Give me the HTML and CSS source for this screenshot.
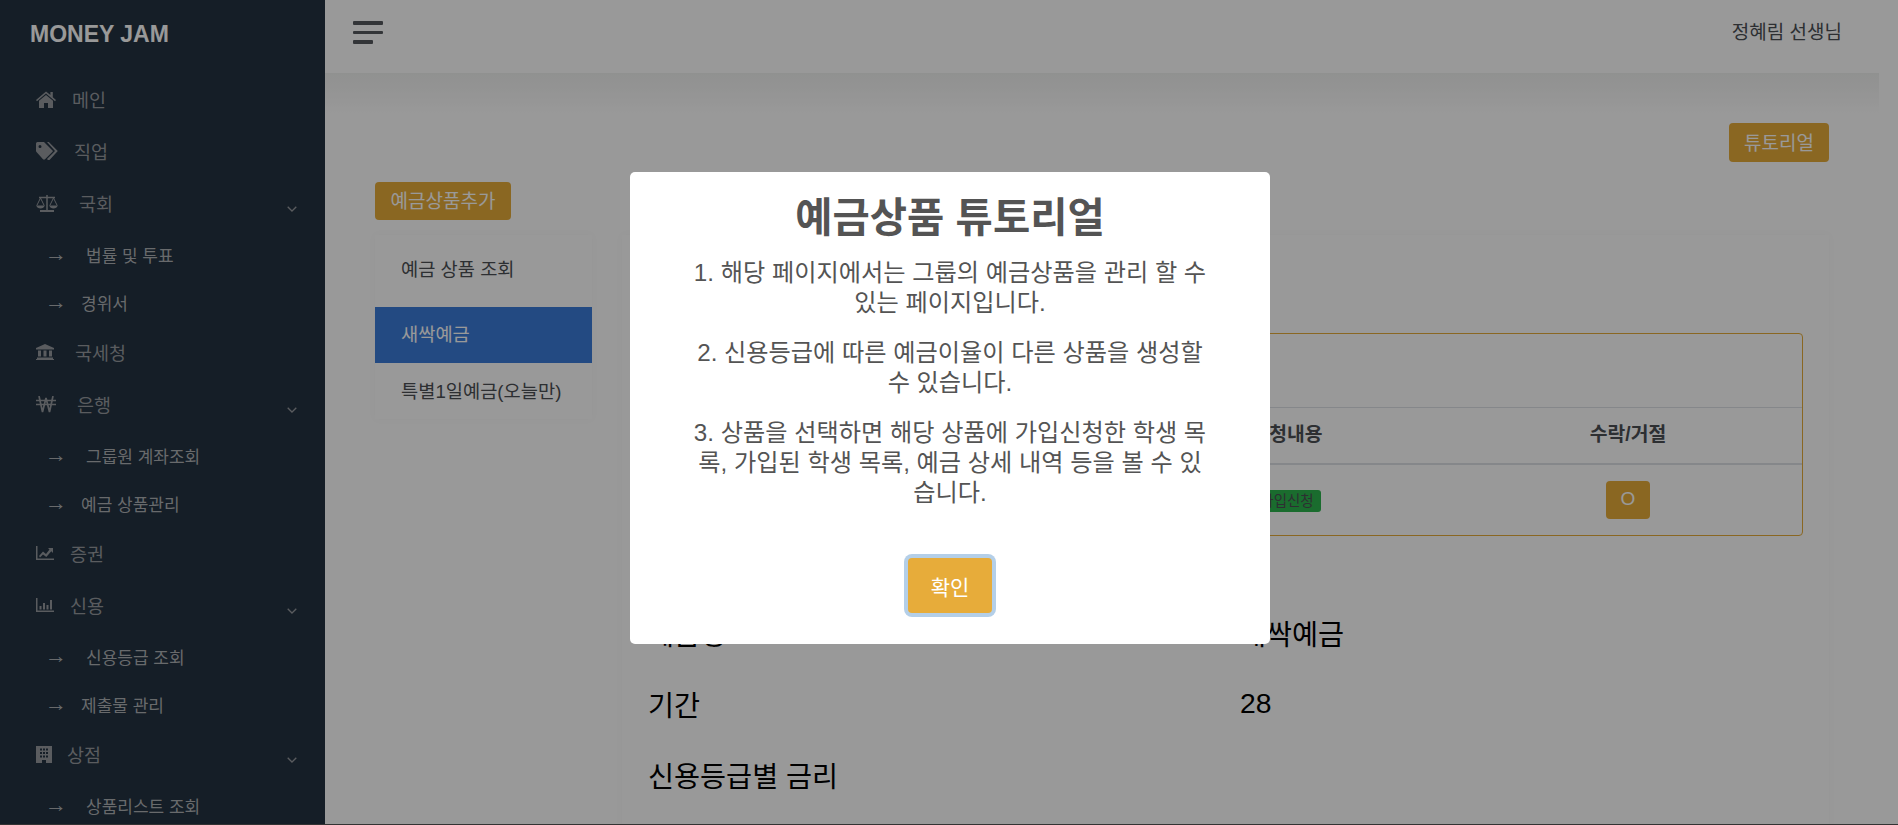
FILE: index.html
```html
<!DOCTYPE html>
<html lang="ko">
<head>
<meta charset="utf-8">
<title>MONEY JAM</title>
<link rel="stylesheet" href="styles.css">
</head>
<body>
<div class="app">
  <aside class="sidebar">
    <div class="logo">MONEY JAM</div>
    <nav class="menu">
      <a class="item"><svg class="ico gap16" width="20" height="18" viewBox="0 0 20 18"><path d="M10 1.5 0 10l1 1.2L10 3.6l9 7.6 1-1.2-3.200-2.700V2h-2.400v3L10 1.500zM10 5 3 10.800V18h5v-5h4v5h5v-7.200L10 5z"/></svg>메인</a>
      <a class="item"><svg class="ico gap16" width="22" height="18" viewBox="0 0 22 18"><path d="M0 1.500A1.500 1.500 0 0 1 1.500 0H8l9 9-.500.800L9 17.300a1.500 1.500 0 0 1-2 0L.500 10A1.500 1.500 0 0 1 0 9V1.500zM4 3a1.500 1.500 0 1 0 0 3 1.500 1.500 0 0 0 0-3zM11 0h1.800l9 9-8.300 9h-1.600l-.900-.900L19 9 11 0z" fill-rule="evenodd"/></svg>직업</a>
      <a class="item"><svg class="ico gap21" width="22" height="18" viewBox="0 0 22 18"><path class="line" d="M11 1v15M3 3.500h16" stroke-width="1.500"/><path class="line" d="M.8 11.500 4.500 4l3.700 7.500M13.800 11.500 17.500 4l3.700 7.500" stroke-width="1"/><path d="M.3 11.500h8.400c-.4 2-2.200 3-4.200 3s-3.800-1-4.200-3zM13.300 11.500h8.400c-.4 2-2.200 3-4.200 3s-3.800-1-4.200-3zM4 16h14v2H4z"/></svg>국회<svg class="chev" width="10" height="6" viewBox="0 0 10 6"><path d="M.7.7 5 5l4.300-4.300" fill="none" stroke="currentColor" stroke-width="1.300"/></svg></a>
      <a class="sub"><span class="arrow">→</span><span class="pad5">법률 및 투표</span></a>
      <a class="sub"><span class="arrow">→</span>경위서</a>
      <a class="item"><svg class="ico gap21" width="18" height="16" viewBox="0 0 18 16"><path d="M9 0 18 4v1.500H0V4L9 0zM2 6.500h3v6H2v-6zM7.500 6.500h3v6h-3v-6zM13 6.500h3v6h-3v-6zM1 13.500h16V15H1v-1.500zM0 15h18v1H0v-1z"/></svg>국세청</a>
      <a class="item"><svg class="ico gap21" width="20" height="17" viewBox="0 0 20 17"><path class="line" d="M3 0l3.500 16L10 2l3.500 14L17 0" stroke-width="1.700"/><path class="line" d="M0 4.500h20M0 8.500h20" stroke-width="1.500"/></svg>은행<svg class="chev" width="10" height="6" viewBox="0 0 10 6"><path d="M.7.7 5 5l4.300-4.300" fill="none" stroke="currentColor" stroke-width="1.300"/></svg></a>
      <a class="sub"><span class="arrow">→</span><span class="pad5">그룹원 계좌조회</span></a>
      <a class="sub"><span class="arrow">→</span>예금 상품관리</a>
      <a class="item"><svg class="ico gap16" width="18" height="14" viewBox="0 0 18 14"><path d="M0 0h1.500v12.500H18V14H0V0zM3 10l4-4.500 3 2.500 3.500-4.500L12 2h5v5l-1.700-1.800L10.300 11 7 8.500 4 11.500 3 10z"/></svg>증권</a>
      <a class="item"><svg class="ico gap16" width="18" height="14" viewBox="0 0 18 14"><path d="M0 0h1.500v12.500H18V14H0V0zM3.500 8h2v3.500h-2V8zM7 5h2v6.500H7V5zM10.500 7h2v4.500h-2V7zM14 2h2v9.500h-2V2z"/></svg>신용<svg class="chev" width="10" height="6" viewBox="0 0 10 6"><path d="M.7.7 5 5l4.300-4.300" fill="none" stroke="currentColor" stroke-width="1.300"/></svg></a>
      <a class="sub"><span class="arrow">→</span><span class="pad5">신용등급 조회</span></a>
      <a class="sub"><span class="arrow">→</span>제출물 관리</a>
      <a class="item"><svg class="ico gap16 tight" width="16" height="17" viewBox="0 0 16 17"><path fill-rule="evenodd" d="M0 0h16v17H10v-3H6v3H0V0zM4 2.500v2h2v-2H4zM7 2.500v2h2v-2H7zM10 2.500v2h2v-2h-2zM4 6v2h2V6H4zM7 6v2h2V6H7zM10 6v2h2V6h-2zM4 9.500v2h2v-2H4zM7 9.500v2h2v-2H7zM10 9.500v2h2v-2h-2z"/></svg>상점<svg class="chev" width="10" height="6" viewBox="0 0 10 6"><path d="M.7.7 5 5l4.300-4.300" fill="none" stroke="currentColor" stroke-width="1.300"/></svg></a>
      <a class="sub"><span class="arrow">→</span><span class="pad5">상품리스트 조회</span></a>
    </nav>
  </aside>
  <main class="main">
    <header class="topbar">
      <div class="burger"><span></span><span class="thin"></span><span class="short"></span></div>
      <div class="user">정혜림 선생님</div>
    </header>
    <div class="strip"></div>
    <div class="content">
      <div class="tutorial-row"><button class="btn">튜토리얼</button></div>
      <button class="btn add">예금상품추가</button>
      <div class="columns">
        <ul class="list">
          <li class="list-head">예금 상품 조회</li>
          <li class="active">새싹예금</li>
          <li class="last">특별1일예금(오늘만)</li>
        </ul>
        <section class="detail">
          <div class="tbox">
            <div class="thead-space"></div>
            <div class="trow th"><span></span><span>신청내용</span><span>수락/거절</span></div>
            <div class="trow td"><span></span><span><b class="badge">가입신청</b></span><span><button class="btn ok">O</button></span></div>
          </div>
          <div class="info">
            <div class="info-row"><span>예금명</span><span>새싹예금</span></div>
            <div class="info-row"><span>기간</span><span>28</span></div>
            <div class="info-row"><span>신용등급별 금리</span></div>
          </div>
        </section>
      </div>
    </div>
  </main>
</div>
<div class="overlay">
  <div class="modal">
    <h2>예금상품 튜토리얼</h2>
    <p>1. 해당 페이지에서는 그룹의 예금상품을 관리 할 수 있는 페이지입니다.</p>
    <p>2. 신용등급에 따른 예금이율이 다른 상품을 생성할 수 있습니다.</p>
    <p>3. 상품을 선택하면 해당 상품에 가입신청한 학생 목록, 가입된 학생 목록, 예금 상세 내역 등을 볼 수 있습니다.</p>
    <button class="confirm">확인</button>
  </div>
</div>
</body>
</html>
```
FILE: styles.css
```css
* { box-sizing: border-box; }
html, body { margin: 0; height: 100%; overflow: hidden; }
body { font-family: "Liberation Sans", "Noto Sans CJK KR", sans-serif; background: #fff; color: #4b4f54; }
.app { display: flex; height: 825px; overflow: hidden; }
.sidebar { width: 325px; flex: none; background: #233241; color: #969a9f; }
.logo { height: 73px; padding: 20px 0 0 30px; font-size: 23px; line-height: 28px; font-weight: 700; color: #fff; }
.menu { display: flex; flex-direction: column; }
.item { position: relative; display: flex; align-items: center; height: 52px; padding-left: 36px; font-size: 18.500px; }
.sub { display: flex; align-items: center; height: 48px; padding-left: 45px; font-size: 17px; color: #aeb1b5; }
.item + .sub { margin-top: 1px; }
.arrow { width: 36px; flex: none; font-size: 22px; line-height: 24px; }
.pad5 { padding-left: 5px; }
.ico { fill: currentColor; flex: none; }
.line { fill: none; stroke: currentColor; }
.gap16 { margin-right: 16px; }
.gap21 { margin-right: 21px; }
.tight { margin-right: 15px; }
.chev { position: absolute; right: 28px; top: 29px; }
.main { flex: 1; min-width: 0; display: flex; flex-direction: column; }
.topbar { height: 73px; flex: none; display: flex; align-items: center; justify-content: space-between; padding: 0 56px 8px 28px; }
.burger { display: flex; flex-direction: column; gap: 6px; width: 30px; }
.burger span { display: block; height: 4px; border-radius: 1px; background: #55595e; }
.burger .thin { height: 3px; }
.burger .short { width: 20px; }
.user { font-size: 19px; line-height: 24px; color: #4b4f54; }
.strip { height: 40px; flex: none; margin: 0 19px -40px 0; background: linear-gradient(#f1f2f1, #f9f9f9 60%, #ffffff); }
.content { position: relative; padding: 50px 69px 0 50px; }
.tutorial-row { display: flex; justify-content: flex-end; }
.btn { border: 0; border-radius: 4px; background: #e7ac3a; color: #fff; font: inherit; font-size: 19px; padding: 0 0 3px; }
.tutorial-row .btn { width: 100px; height: 39px; }
.add { display: block; width: 136px; height: 38px; margin-top: 20px; }
.columns { display: flex; align-items: flex-start; gap: 30px; margin-top: 15px; }
.list { width: 217px; flex: none; margin: 0; padding: 0; list-style: none; font-size: 18.700px; box-shadow: 0 0 8px rgba(0,0,0,.03); }
.list li { display: flex; align-items: center; padding-left: 26px; height: 56px; }
.list .list-head { height: 72px; padding-bottom: 8px; }
.list .active { background: #3b7cd9; color: #fff; padding-bottom: 6px; }
.list .last { padding-bottom: 4px; }
.detail { flex: 1; min-width: 0; height: 700px; padding: 98px 26px 0 26px; box-shadow: 0 0 8px rgba(0,0,0,.03); color: #000; }
.tbox { height: 203px; border: 1px solid #e7ac3a; border-radius: 4px; color: #4b4f54; }
.thead-space { height: 73px; }
.trow { display: grid; grid-template-columns: 1fr 334px 348px; align-items: center; text-align: center; font-size: 19.300px; }
.th { height: 58px; padding-bottom: 5px; border-top: 1px solid #dee2e6; border-bottom: 2px solid #dee2e6; font-weight: 700; }
.td { height: 70px; }
.badge { display: inline-block; padding: 0 7px; border-radius: 3px; background: #2cb44d; font-size: 14.500px; line-height: 22px; font-weight: 400; }
.ok { width: 44px; height: 38px; }
.info { padding-top: 61px; font-size: 28.300px; }
.info-row { display: grid; grid-template-columns: 592px 1fr; height: 71px; align-items: center; }
.overlay { position: fixed; inset: 0; background: rgba(0,0,0,.4); border-bottom: 1px solid #333; }
.modal { position: absolute; left: 630px; top: 172px; width: 640px; height: 472px; padding: 22px 60px 0; background: #fff; border-radius: 5px; text-align: center; color: #545454; }
.modal h2 { margin: 0 0 16px; font-size: 40.500px; line-height: 48px; font-weight: 700; }
.modal p { margin: 0 0 20px; font-size: 24.200px; line-height: 30px; }
.confirm { display: block; margin: 50px auto 0; width: 84px; height: 55px; padding: 0; border: 0; border-radius: 4px; background: #e7ac3a; color: #fff; font: inherit; font-size: 21px; box-shadow: 0 0 0 4px #b4cfe8; }
```
